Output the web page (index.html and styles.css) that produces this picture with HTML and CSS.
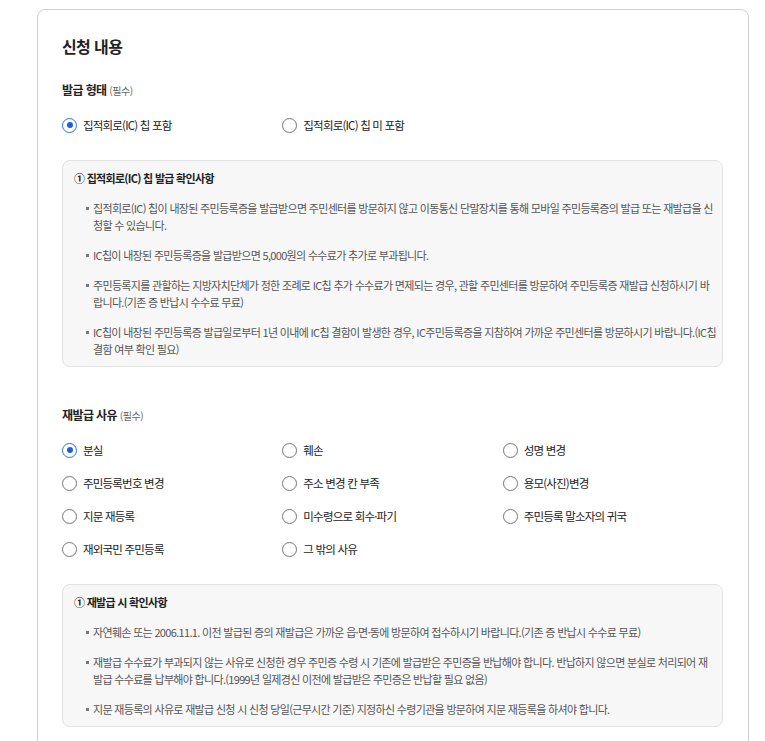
FILE: index.html
```html
<!DOCTYPE html>
<html lang="ko">

<head>
    <meta charset="utf-8">
    <title>신청 내용</title>
    <link rel="stylesheet" href="styles.css">
</head>

<body>
    <div class="page">
        <section class="card">
            <h2 class="card-title">신청 내용</h2>

            <!-- 발급 형태 -->
            <div class="field">
                <div class="field-label">발급 형태 <span class="req">(필수)</span></div>
                <div class="options">
                    <label class="radio"><input type="radio" name="type" checked><span>집적회로(IC) 칩 포함</span></label>
                    <label class="radio"><input type="radio" name="type"><span>집적회로(IC) 칩 미 포함</span></label>
                </div>
                <div class="notice">
                    <p class="notice-title">① 집적회로(IC) 칩 발급 확인사항</p>
                    <ul class="notice-list">
                        <li>집적회로(IC) 칩이 내장된 주민등록증을 발급받으면 주민센터를 방문하지 않고 이동통신 단말장치를 통해 모바일 주민등록증의 발급 또는 재발급을 신청할 수 있습니다.</li>
                        <li>IC칩이 내장된 주민등록증을 발급받으면 5,000원의 수수료가 추가로 부과됩니다.</li>
                        <li>주민등록지를 관할하는 지방자치단체가 정한 조례로 IC칩 추가 수수료가 면제되는 경우, 관할 주민센터를 방문하여 주민등록증 재발급 신청하시기 바랍니다.(기존 증 반납시 수수료 무료)</li>
                        <li>IC칩이 내장된 주민등록증 발급일로부터 1년 이내에 IC칩 결함이 발생한 경우, IC주민등록증을 지참하여 가까운 주민센터를 방문하시기 바랍니다.(IC칩 결함 여부 확인 필요)</li>
                    </ul>
                </div>
            </div>

            <!-- 재발급 사유 -->
            <div class="field">
                <div class="field-label">재발급 사유 <span class="req">(필수)</span></div>
                <div class="options">
                    <label class="radio"><input type="radio" name="reason" checked><span>분실</span></label>
                    <label class="radio"><input type="radio" name="reason"><span>훼손</span></label>
                    <label class="radio"><input type="radio" name="reason"><span>성명 변경</span></label>
                    <label class="radio"><input type="radio" name="reason"><span>주민등록번호 변경</span></label>
                    <label class="radio"><input type="radio" name="reason"><span>주소 변경 칸 부족</span></label>
                    <label class="radio"><input type="radio" name="reason"><span>용모(사진)변경</span></label>
                    <label class="radio"><input type="radio" name="reason"><span>지문 재등록</span></label>
                    <label class="radio"><input type="radio" name="reason"><span>미수령으로 회수·파기</span></label>
                    <label class="radio"><input type="radio" name="reason"><span>주민등록 말소자의 귀국</span></label>
                    <label class="radio"><input type="radio" name="reason"><span>재외국민 주민등록</span></label>
                    <label class="radio"><input type="radio" name="reason"><span>그 밖의 사유</span></label>
                </div>
                <div class="notice">
                    <p class="notice-title">① 재발급 시 확인사항</p>
                    <ul class="notice-list">
                        <li>자연훼손 또는 2006.11.1. 이전 발급된 증의 재발급은 가까운 읍·면·동에 방문하여 접수하시기 바랍니다.(기존 증 반납시 수수료 무료)</li>
                        <li>재발급 수수료가 부과되지 않는 사유로 신청한 경우 주민증 수령 시 기존에 발급받은 주민증을 반납해야 합니다. 반납하지 않으면 분실로 처리되어 재발급 수수료를 납부해야 합니다.(1999년 일제경신 이전에 발급받은 주민증은 반납할 필요 없음)</li>
                        <li>지문 재등록의 사유로 재발급 신청 시 신청 당일(근무시간 기준) 지정하신 수령기관을 방문하여 지문 재등록을 하셔야 합니다.</li>
                    </ul>
                </div>
            </div>
        </section>
    </div>
</body>

</html>
```

FILE: styles.css
```css
* {
    margin: 0;
    padding: 0;
    box-sizing: border-box;
}

body {
    font-family: 'Noto Sans CJK KR', 'Noto Sans', sans-serif;
    background-color: #ffffff;
    color: #222222;
}

.page {
    padding: 9px 16px 0 37px;
}

.card {
    width: 712px;
    min-height: 760px;
    border: 1px solid #cfcfcf;
    border-radius: 8px;
    padding: 24px 25px 24px 24px;
}

.card-title {
    font-size: 16px;
    font-weight: 700;
    line-height: 24px;
    letter-spacing: -0.6px;
    margin-bottom: 22px;
}

.field + .field {
    margin-top: 38px;
}

.field-label {
    font-size: 12px;
    font-weight: 700;
    line-height: 20px;
    letter-spacing: -0.6px;
    margin-bottom: 14px;
}

.req {
    font-size: 10px;
    font-weight: 400;
    color: #666666;
    letter-spacing: -0.4px;
}

.options {
    display: grid;
    grid-template-columns: repeat(3, 1fr);
    row-gap: 13px;
}

.radio {
    display: flex;
    align-items: center;
    gap: 6px;
    height: 20px;
    font-size: 11.5px;
    letter-spacing: -0.8px;
    color: #222222;
    cursor: pointer;
}

.radio input {
    appearance: none;
    -webkit-appearance: none;
    width: 15px;
    height: 15px;
    border: 1px solid #767676;
    border-radius: 50%;
    background: #ffffff;
    display: grid;
    place-items: center;
    flex-shrink: 0;
}

.radio input:checked {
    border: 1.5px solid #2f6fe0;
}

.radio input:checked::after {
    content: '';
    width: 6px;
    height: 6px;
    border-radius: 50%;
    background: #1d5fd6;
}

.notice {
    margin-top: 25px;
    background: #f7f7f7;
    border: 1px solid #e2e2e2;
    border-radius: 8px;
    padding: 8px 6px 8px 11px;
}

.notice-title {
    font-size: 11px;
    font-weight: 700;
    line-height: 18px;
    letter-spacing: -0.7px;
    color: #222222;
}

.notice-list {
    list-style: none;
    margin-top: 13px;
}

.notice-list li {
    position: relative;
    padding-left: 19px;
    font-size: 11px;
    line-height: 17px;
    letter-spacing: -0.68px;
    word-break: break-all;
    color: #555555;
}

.notice-list li + li {
    margin-top: 13px;
}

.notice-list li::before {
    content: '';
    position: absolute;
    left: 12px;
    top: 7px;
    width: 3px;
    height: 3px;
    background: #777777;
}
```
